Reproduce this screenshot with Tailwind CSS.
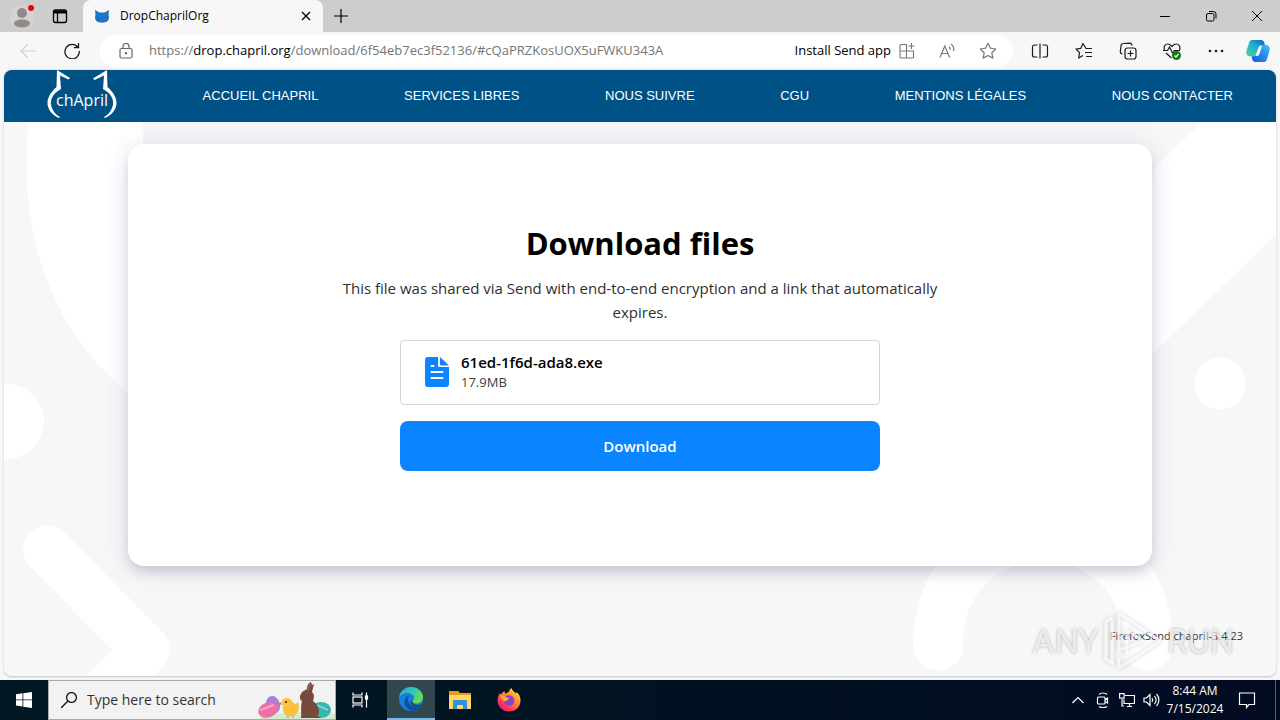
<!DOCTYPE html>
<html lang="en">
<head>
<meta charset="utf-8">
<meta name="viewport" content="width=device-width, initial-scale=1">
<title>DropChaprilOrg</title>
<script src="https://cdn.jsdelivr.net/npm/@tailwindcss/browser@4"></script>
</head>
<body class="flex h-screen flex-col overflow-hidden bg-[#f7f7f7] font-['Open_Sans','Noto_Sans',sans-serif] text-black">

<!-- Tab strip -->
<header class="flex h-8 shrink-0 items-stretch bg-[#cdcdcd]">
  <div class="flex w-[83px] items-center gap-4 rounded-br-md bg-[#cdcdcd] pl-[10px]">
    <button aria-label="Profile" class="size-6">
      <svg viewBox="0 0 24 24" class="size-6 overflow-visible"><circle cx="12" cy="13" r="12" fill="#d5d3d1"/><circle cx="12" cy="9" r="5" fill="#8f8b88"/><path d="M4 20c0-3 3-4.500 8-4.500s8 1.500 8 4.500c-1.500 2.500-4 3.500-8 3.500S5.500 22.500 4 20z" fill="#8f8b88"/><circle cx="21" cy="4" r="3" fill="#e30613"/></svg>
    </button>
    <button aria-label="Tab actions" class="size-5">
      <svg viewBox="0 0 20 20" class="size-5" fill="none" stroke="#000" stroke-width="1.300"><rect x="3.500" y="4" width="13" height="12.500" rx="2"/><path d="M3.500 6h13" stroke-width="3"/><path d="M7.500 6v10"/></svg>
    </button>
  </div>
  <div class="flex w-60 items-center rounded-t-lg bg-[#f7f7f7] px-3">
    <svg viewBox="0 0 14 13" class="h-[13px] w-[14px]"><path d="M0 0l4.500 2.500h5L14 0l-.5 5c1 3 .3 5-1.500 6.500-2 1.500-8 1.500-10 0C.2 10-.5 8 .5 5z" fill="#1a75c4"/></svg>
    <span class="ml-[11px] flex-1 text-xs">DropChaprilOrg</span>
    <button aria-label="Close tab"><svg viewBox="0 0 10 10" class="size-[10px]" stroke="#000" stroke-width="1.300"><path d="M1 1l8 8M9 1L1 9"/></svg></button>
  </div>
  <button aria-label="New tab" class="flex w-9 items-center justify-center rounded-bl-md"><svg viewBox="0 0 14 14" class="size-[14px]" stroke="#000" stroke-width="1.200"><path d="M7 0v14M0 7h14"/></svg></button>
  <div class="ml-auto flex">
    <button aria-label="Minimize" class="flex w-[46px] items-center justify-center"><svg viewBox="0 0 10 10" class="size-[10px]" stroke="#000"><path d="M0 5.500h10"/></svg></button>
    <button aria-label="Restore" class="flex w-[46px] items-center justify-center"><svg viewBox="0 0 12 12" class="size-3" fill="none" stroke="#000"><rect x="1.500" y="3.500" width="7.500" height="7.500" rx="1.500"/><path d="M4 1.500h4.500a2.500 2.500 0 0 1 2.500 2.500v4.500"/></svg></button>
    <button aria-label="Close" class="flex w-[46px] items-center justify-center"><svg viewBox="0 0 10 10" class="size-[10px]" stroke="#000"><path d="M0 0l10 10M10 0L0 10"/></svg></button>
  </div>
</header>

<!-- Address bar -->
<div class="flex h-[38px] shrink-0 items-center">
  <div class="flex w-[100px] items-center gap-7 pl-5">
    <button aria-label="Back" class="size-4"><svg viewBox="0 0 16 16" class="size-4" fill="none" stroke="#d0d0d0" stroke-width="1.200"><path d="M16 8H1M7.500 1.500L1 8l6.500 6.500"/></svg></button>
    <button aria-label="Refresh" class="size-4"><svg viewBox="0 0 16 16" class="size-4" fill="none" stroke="#1b1b1b" stroke-width="1.300"><path d="M14 4.500A7.200 7.200 0 1 0 15.300 8"/><path d="M14.500 0v4.700H9.800"/></svg></button>
  </div>
  <div class="flex h-8 flex-1 items-center rounded-full bg-white pr-4 pl-[19px]">
    <svg viewBox="0 0 14 16" class="h-4 w-[14px] shrink-0" fill="none" stroke="#666" stroke-width="1.200"><rect x="1" y="5.500" width="12" height="9.500" rx="1.500"/><path d="M4 5.500V3.500a3 3 0 0 1 6 0v2"/><circle cx="7" cy="10.200" r=".6" fill="#666"/></svg>
    <a href="#" class="ml-4 flex-1 text-[13px] text-[#757575]">https://<span class="text-black">drop.chapril.org</span>/download/6f54eb7ec3f52136/#cQaPRZKosUOX5uFWKU343A</a>
    <button class="flex items-center gap-2 text-[13px]">Install Send app
      <svg viewBox="0 0 16 16" class="size-4" fill="none" stroke="#777" stroke-width="1.100"><path d="M7.500 8V1.500H2A1 1 0 0 0 1 2.500V14a1 1 0 0 0 1 1h11.500a1 1 0 0 0 1-1V8H1M7.500 8v7M12.500 0v6M9.500 3h6"/></svg>
    </button>
    <button aria-label="Read aloud" class="ml-6"><svg viewBox="0 0 16 16" class="size-4" fill="none" stroke="#777" stroke-width="1.200"><path d="M1 14.500L5.800 3l4.800 11.500M2.500 10.500h6.600M10 3.500c1 .8 1.300 2 1 3.500M12 1c2.500 1.700 3.200 4.200 2.500 7"/></svg></button>
    <button aria-label="Add to favorites" class="ml-6"><svg viewBox="0 0 18 18" class="size-[18px]" fill="none" stroke="#777" stroke-width="1.200" stroke-linejoin="round"><path d="M9 1.300l2.400 4.900 5.300.8-3.900 3.700 1 5.400L9 13.500l-4.800 2.600 1-5.400L1.300 7l5.300-.8z"/></svg></button>
  </div>
  <div class="flex items-center gap-[26px] pr-[10px] pl-[18px]">
    <button aria-label="Split screen"><svg viewBox="0 0 18 18" class="size-[18px]" fill="none" stroke="#1b1b1b" stroke-width="1.200"><path d="M6.500 3H3.500a2 2 0 0 0-2 2v8a2 2 0 0 0 2 2h3M9 1.500v15M11.500 3h3a2 2 0 0 1 2 2v8a2 2 0 0 1-2 2h-3"/></svg></button>
    <button aria-label="Favorites"><svg viewBox="0 0 18 18" class="size-[18px]" fill="none" stroke="#1b1b1b" stroke-width="1.200" stroke-linejoin="round"><path d="M16 6.500h-5L8 1.500 5.800 6.300 1 7l3.500 3.700-.8 5.300L8 13.500M11 6.500h6M10 10.500h7M11 14.500h6"/></svg></button>
    <button aria-label="Collections"><svg viewBox="0 0 18 18" class="size-[18px]" fill="none" stroke="#1b1b1b" stroke-width="1.200"><rect x="6" y="6" width="11" height="11" rx="2.500"/><path d="M11.500 8.500v6M8.500 11.500h6M3.500 12A2.500 2.500 0 0 1 1.300 9.500L2 4a2.500 2.500 0 0 1 2.500-2.500l6-.3A2.500 2.500 0 0 1 13 3.500"/></svg></button>
    <button aria-label="Browser essentials"><svg viewBox="0 0 18 18" class="size-[18px]" fill="none" stroke="#1b1b1b" stroke-width="1.200"><path d="M1.500 8C.3 4.500 2 2 4.800 2 7 2 8.500 4 9 4.500 9.500 4 11 2 13.200 2c2.800 0 4.500 2.500 3.300 6M0 8.500h4.500L6.500 5l3 6 2-2.500h5.500M3 11l5.500 5"/><circle cx="13.500" cy="13.500" r="4.500" fill="#107c10" stroke="none"/><path d="M11.500 13.500l1.500 1.500 2.500-3" stroke="#fff"/></svg></button>
    <button aria-label="Settings and more"><svg viewBox="0 0 18 18" class="size-[18px]" fill="#1b1b1b"><circle cx="3" cy="9" r="1.300"/><circle cx="9" cy="9" r="1.300"/><circle cx="15" cy="9" r="1.300"/></svg></button>
    <button aria-label="Copilot" class="-ml-[5px]"><svg viewBox="0 0 24 24" class="size-6">
      <defs>
        <linearGradient id="cpA" x1="0" y1="1" x2="1" y2="0"><stop offset="0" stop-color="#55d08a"/><stop offset=".5" stop-color="#24b4d0"/><stop offset="1" stop-color="#1557c8"/></linearGradient>
        <linearGradient id="cpB" x1="0" y1="1" x2="1" y2="0"><stop offset="0" stop-color="#1357d8"/><stop offset=".5" stop-color="#2787ee"/><stop offset="1" stop-color="#3fc4f5"/></linearGradient>
      </defs>
      <path d="M6 1h9c2 0 3 1.500 3.500 3.500L19 6h-3c-2 0-3 1-3.500 2.500L10 15c-.7 1.700-1.600 2.300-3.500 2.300H4C1 17.300-.3 15 .4 12L3 4c.6-2 1.500-3 3-3z" fill="url(#cpA)"/>
      <path d="M18 23H9.500C7.500 23 6.500 21.700 6 19.500L5.500 17.300H7c2 0 3-1 3.600-2.500L13 8.500c.7-1.800 1.700-2.500 3.500-2.500H20c3 0 4.300 2.500 3.600 5.500L21 20c-.6 2-1.500 3-3 3z" fill="url(#cpB)"/>
      <path d="M13.500 7L9.500 17h1.800c1.500-.3 2-1.500 2.500-3l2.300-7z" fill="#f5fbff"/>
    </svg></button>
  </div>
</div>

<!-- Web page -->
<div class="relative isolate mx-1 mb-[3px] flex min-h-0 flex-1 flex-col overflow-hidden rounded-lg border-b border-[#d2d2d6] bg-[#f7f7f8] shadow-[0_0_2px_#bbb]">
  <svg class="absolute inset-0 -z-10 size-full" viewBox="4 70 1272 607" preserveAspectRatio="xMidYMid slice" fill="#fff" aria-hidden="true">
    <path d="M30 110C16 220 44 325 128 393L240 440 160 220C146 190 142 150 142 110z"/>
    <circle cx="6" cy="422" r="38"/>
    <path d="M47 550L146 650L86 710" fill="none" stroke="#fff" stroke-width="48" stroke-linecap="round" stroke-linejoin="round"/>
    <path d="M938 646C938 500 1148 500 1148 646" fill="none" stroke="#fff" stroke-width="50" stroke-linecap="round"/>
    <path d="M1100 222L1202 122H1276V235L1100 405z"/>
    <circle cx="1220" cy="384" r="26"/>
  </svg>

  <nav class="flex h-[52px] shrink-0 items-center justify-between bg-[#005286] px-[43px] font-['Liberation_Sans',Arial,sans-serif] text-[13px] text-white">
    <a href="#" aria-label="chApril" class="h-[52px]">
      <svg viewBox="0 0 70 52" class="h-[52px] w-[70px]">
        <g fill="#fff"><path d="M10 0L23 8 21.500 9.500 13 5.500 14 19C5 24 2 31 5 38c1.500 4 4 7 8 9l-1 1C5 45 0 39 .500 32 1 26 5 21 9.500 17z"/><path d="M60 0L46 8.500 47.500 10 57 5.500 56 19c9 5 12 12 9 19-1.500 4-4 7-8 9l1 1C65 45 70 39 69.500 32 69 26 65 21 60.500 17z"/></g>
        <text x="35" y="36" text-anchor="middle" fill="#fff" font-family="Open Sans, sans-serif" font-size="16" font-weight="500">chApril</text>
      </svg>
    </a>
    <a href="#">ACCUEIL CHAPRIL</a>
    <a href="#">SERVICES LIBRES</a>
    <a href="#">NOUS SUIVRE</a>
    <a href="#">CGU</a>
    <a href="#">MENTIONS LÉGALES</a>
    <a href="#">NOUS CONTACTER</a>
  </nav>

  <main class="mx-auto mt-[22px] w-[82%] max-w-5xl rounded-2xl bg-white px-6 pt-[79px] pb-[95px] text-center shadow-[0_8px_12px_-2px_rgba(30,40,80,0.16),0_2px_26px_rgba(40,60,110,0.14)]">
    <h1 class="text-[31px] leading-10 font-bold">Download files</h1>
    <p class="mx-auto mt-[13px] max-w-[608px] text-[15px] leading-6 text-[#2f2f33]">This file was shared via Send with end-to-end encryption and a link that automatically expires.</p>
    <div class="mx-auto mt-4 flex h-[65px] max-w-[480px] items-center rounded-sm border border-[#d5d5d9] px-6 pb-[2px] text-left">
      <svg viewBox="0 0 24 30" class="h-[30px] w-6"><path d="M3 0h10v8.500A1.500 1.500 0 0 0 14.500 10H24v17a3 3 0 0 1-3 3H3a3 3 0 0 1-3-3V3a3 3 0 0 1 3-3z" fill="#0a84ff"/><path d="M15 0l9 8.500h-7.500A1.500 1.500 0 0 1 15 7z" fill="#0a84ff"/><path d="M6.500 9h2M6.500 15h11M6.500 21h11" stroke="#fff" stroke-width="2" stroke-linecap="round"/></svg>
      <div class="ml-3">
        <p class="text-[15px] leading-5 font-semibold">61ed-1f6d-ada8.exe</p>
        <p class="text-[13px] leading-5 text-[#3d3d42]">17.9MB</p>
      </div>
    </div>
    <button class="mt-4 h-[50px] w-full max-w-[480px] rounded-lg bg-[#0a84ff] text-[15px] font-semibold text-white">Download</button>
  </main>

  <footer class="mt-auto mb-8 px-[33px] text-right text-[11px] leading-4 text-[#38383d]">FirefoxSend chapril-3.4.23</footer>

  <!-- Recording watermark -->
  <div aria-hidden="true" class="pointer-events-none absolute right-[42px] bottom-1 flex items-center gap-1 font-[Roboto,sans-serif] text-[34px] leading-[62px] text-white/70 [text-shadow:0_0_3px_rgba(0,0,0,0.3)]">
    <span>ANY</span>
    <svg viewBox="0 0 60 62" class="h-[62px] w-[60px] drop-shadow-[0_0_2px_rgba(0,0,0,0.25)]" fill="none" stroke="#fff" stroke-opacity=".7" stroke-width="3" stroke-linejoin="round"><path d="M16 3L57 31 16 58V48M16 3V40L40 31 24 20V44M9 8L3 12V49L9 53V8"/></svg>
    <span>RUN</span>
  </div>
</div>

<!-- Taskbar -->
<div class="flex h-10 shrink-0 items-stretch bg-linear-to-r from-[#001821] to-[#020b22] text-white">
  <button aria-label="Start" class="flex w-12 items-center justify-center"><svg viewBox="0 0 16 16" class="size-4" fill="#fff"><path d="M0 2.200l6.500-.9v6.200H0zM7.300 1.200L16 0v7.500H7.300zM0 8.300h6.500v6.200L0 13.600zM7.300 8.300H16V16l-8.700-1.200z"/></svg></button>
  <div class="flex w-72 items-center border border-[#ababab] bg-[#f2f2f2] pl-3">
    <svg viewBox="0 0 16 16" class="size-4 shrink-0" fill="none" stroke="#111" stroke-width="1.300"><circle cx="10.500" cy="5.500" r="4.900"/><path d="M7 9L0 16"/></svg>
    <input type="text" aria-label="Type here to search" placeholder="Type here to search" class="ml-[10px] w-40 min-w-0 flex-1 bg-transparent text-sm outline-none placeholder:text-[#333]">
    <svg viewBox="0 0 78 38" class="h-[38px] w-[78px] shrink-0" aria-hidden="true">
      <path d="M0 38c10-7 60-9 78-5v5z" fill="#d3ead2"/>
      <ellipse cx="64" cy="29" rx="10" ry="8" fill="#37b5b0"/><path d="M60 24l11 5" stroke="#86dcd0" stroke-width="1.500"/>
      <ellipse cx="16" cy="24" rx="7" ry="9" transform="rotate(-15 16 24)" fill="#a880d4"/>
      <ellipse cx="11" cy="29" rx="10" ry="7.500" transform="rotate(-20 11 29)" fill="#ee6fa5"/><path d="M3 29c5-1 10-4 14-5" stroke="#f9a6c8" stroke-width="2" fill="none"/>
      <path d="M25 22c-1-5 7-7 10-2 2 4 5 3 6 1 2 5 1 11-3 13-6 3-12 0-12-5-1-3 1-4-1-7z" fill="#ffc13c"/><path d="M24 21l-3 2 4 1z" fill="#ef7a22"/><circle cx="29" cy="21" r="1" fill="#222"/><path d="M31 34v3M36 34v3" stroke="#e88b22"/>
      <path d="M44 13c1-3 5-4 6-5 0-3 1-6 4-7l1 3 2-1-2 8c3 3 2 6 1 9 6 4 7 11 5 15l3 2H44c1-6-1-9 1-17-2-1-3-4-1-7z" fill="#764a3d"/><path d="M53 3l-2 7" stroke="#a77361"/>
    </svg>
  </div>
  <button aria-label="Task view" class="flex w-[51px] items-center pl-[15px]"><svg viewBox="0 0 18 18" class="size-[18px]" fill="none" stroke="#fff" stroke-width="1.200"><path d="M2 1.500V4h9V1.500M2 16.500V14h9v2.500M15.500 1.500v15"/><rect x="2" y="6" width="9" height="6"/><rect x="14.500" y="5" width="2" height="3" fill="#fff"/></svg></button>
  <button aria-label="Microsoft Edge" class="flex w-12 items-center justify-center border-b-2 border-[#76b9ed] bg-[#33474f]">
    <svg viewBox="0 0 24 24" class="size-6">
      <defs><linearGradient id="egA" x1="0" y1="0" x2="1" y2=".4"><stop offset="0" stop-color="#2da7e0"/><stop offset=".6" stop-color="#35c5b5"/><stop offset="1" stop-color="#66dc52"/></linearGradient></defs>
      <circle cx="12" cy="12" r="12" fill="#1580d6"/>
      <path d="M0 11C1 4 6 0 12 0c7 0 12 5 12 10 0 4-3 6.500-6.500 6.500-3 0-4-1-4-2s1.500-1.500 1.500-3.500C15 8 12 6 8.500 6 5 6 1 8 0 11z" fill="url(#egA)"/>
      <path d="M10 8.500c-3 1-4.500 3.500-4.500 6.500 0 4.500 4 9 9 8.700 3.500-.5 6.500-2.700 8.200-5.700-5 2.500-12.700 1.500-13.700-4-.3-2 0-3.500 1-5.500z" fill="#0c52a0"/>
      <path d="M13.500 14.500c0 3 5.500 4.500 9.500 2.500l1-1v3l-2-.5c-4 2-10.500 1-11-4z" fill="#33474f"/>
    </svg>
  </button>
  <button aria-label="File Explorer" class="flex w-[49px] items-center justify-center"><svg viewBox="0 0 22 20" class="h-5 w-[22px]"><path d="M0 1h9l2 2h11v4H0z" fill="#e69a1e"/><path d="M0 5h22v14H0z" fill="#ffd765"/><path d="M4 19v-8a1 1 0 0 1 1-1h12a1 1 0 0 1 1 1v8h-4v-4H8v4z" fill="#3390d9"/></svg></button>
  <button aria-label="Firefox" class="flex w-[49px] items-center justify-center"><svg viewBox="0 0 24 24" class="size-6">
    <defs><linearGradient id="ffA" x1="1" y1="0" x2=".2" y2="1"><stop offset="0" stop-color="#fff14f"/><stop offset=".4" stop-color="#ff9a2e"/><stop offset=".75" stop-color="#ff3f52"/><stop offset="1" stop-color="#e31587"/></linearGradient></defs>
    <path d="M3 5c.5 1 1 1.500 1 1.500C5 5 6 4 7.500 3c0 1.200.5 2 1 2.500C10 5 11 4.500 12 3.500 12.500 2 13 1 14.500 0c.5 2.500 3 3.500 4.500 5.500.5-.5.500-1 .5-1.500 3 2 4 5.500 4 8.500 0 6.500-5 11-11.500 11S.5 18.500.5 12.500C.5 9.500 1.500 7 3 5z" fill="url(#ffA)"/>
    <path d="M8 9c2-2 6-2.500 8 0 2.500 3 1.500 8-3 8.500-4 .5-6-2.500-6-5 1 1 2.500 1 3.500 0C11.500 11 10 10 8 9z" fill="#8541d9"/><path d="M3.500 8c2-1 4 0 5 1l4 1.500c-1 1-2 1-3 2-1 1.500-4 0-5-1z" fill="#ffad35"/>
  </svg></button>

  <div class="ml-auto flex items-center">
    <button aria-label="Show hidden icons"><svg viewBox="0 0 12 8" class="h-2 w-3" fill="none" stroke="#fff" stroke-width="1.200"><path d="M.5 7L6 1.500 11.500 7"/></svg></button>
    <button aria-label="Meet now" class="ml-[11px]"><svg viewBox="0 0 16 16" class="size-4" fill="none" stroke="#fff" stroke-width="1.200"><rect x="2.500" y="5" width="7.500" height="7" rx="1"/><path d="M10 7.500l2.500-1.500v5L10 9.500M4 2.500C6 .5 10 .5 12 2.500M4 14.500c2 1.500 6 1.500 8 0"/></svg></button>
    <button aria-label="Network" class="ml-2"><svg viewBox="0 0 16 16" class="size-4" fill="none" stroke="#fff" stroke-width="1.200"><path d="M6 3.500h9.500v8H5V7.500M8 14.500h5M10.500 11.500v3M3 7v7h2"/><rect x=".6" y="1.600" width="4.500" height="4.500"/></svg></button>
    <button aria-label="Volume" class="ml-2"><svg viewBox="0 0 17 16" class="h-4 w-[17px]" fill="none" stroke="#fff" stroke-width="1.200"><path d="M1 6v4h2.500L7 13.500v-11L3.500 6zM9 6c1 1.300 1 2.700 0 4M11.500 4c2 2.500 2 5.500 0 8M13.500 2c3.200 3.500 3.200 8.500 0 12"/></svg></button>
    <div class="w-[70px] text-center text-xs leading-[18px]"><p>8:44 AM</p><p>7/15/2024</p></div>
    <button aria-label="Notifications" class="ml-2"><svg viewBox="0 0 18 18" class="size-[18px]" fill="none" stroke="#fff" stroke-width="1.200"><path d="M1.500 2h15v11.500h-5.500l-2.500 3v-3h-7z"/></svg></button>
    <div class="ml-[19px] h-10 w-[5px] border-l border-[#555c6b]"></div>
  </div>
</div>
</body>
</html>
